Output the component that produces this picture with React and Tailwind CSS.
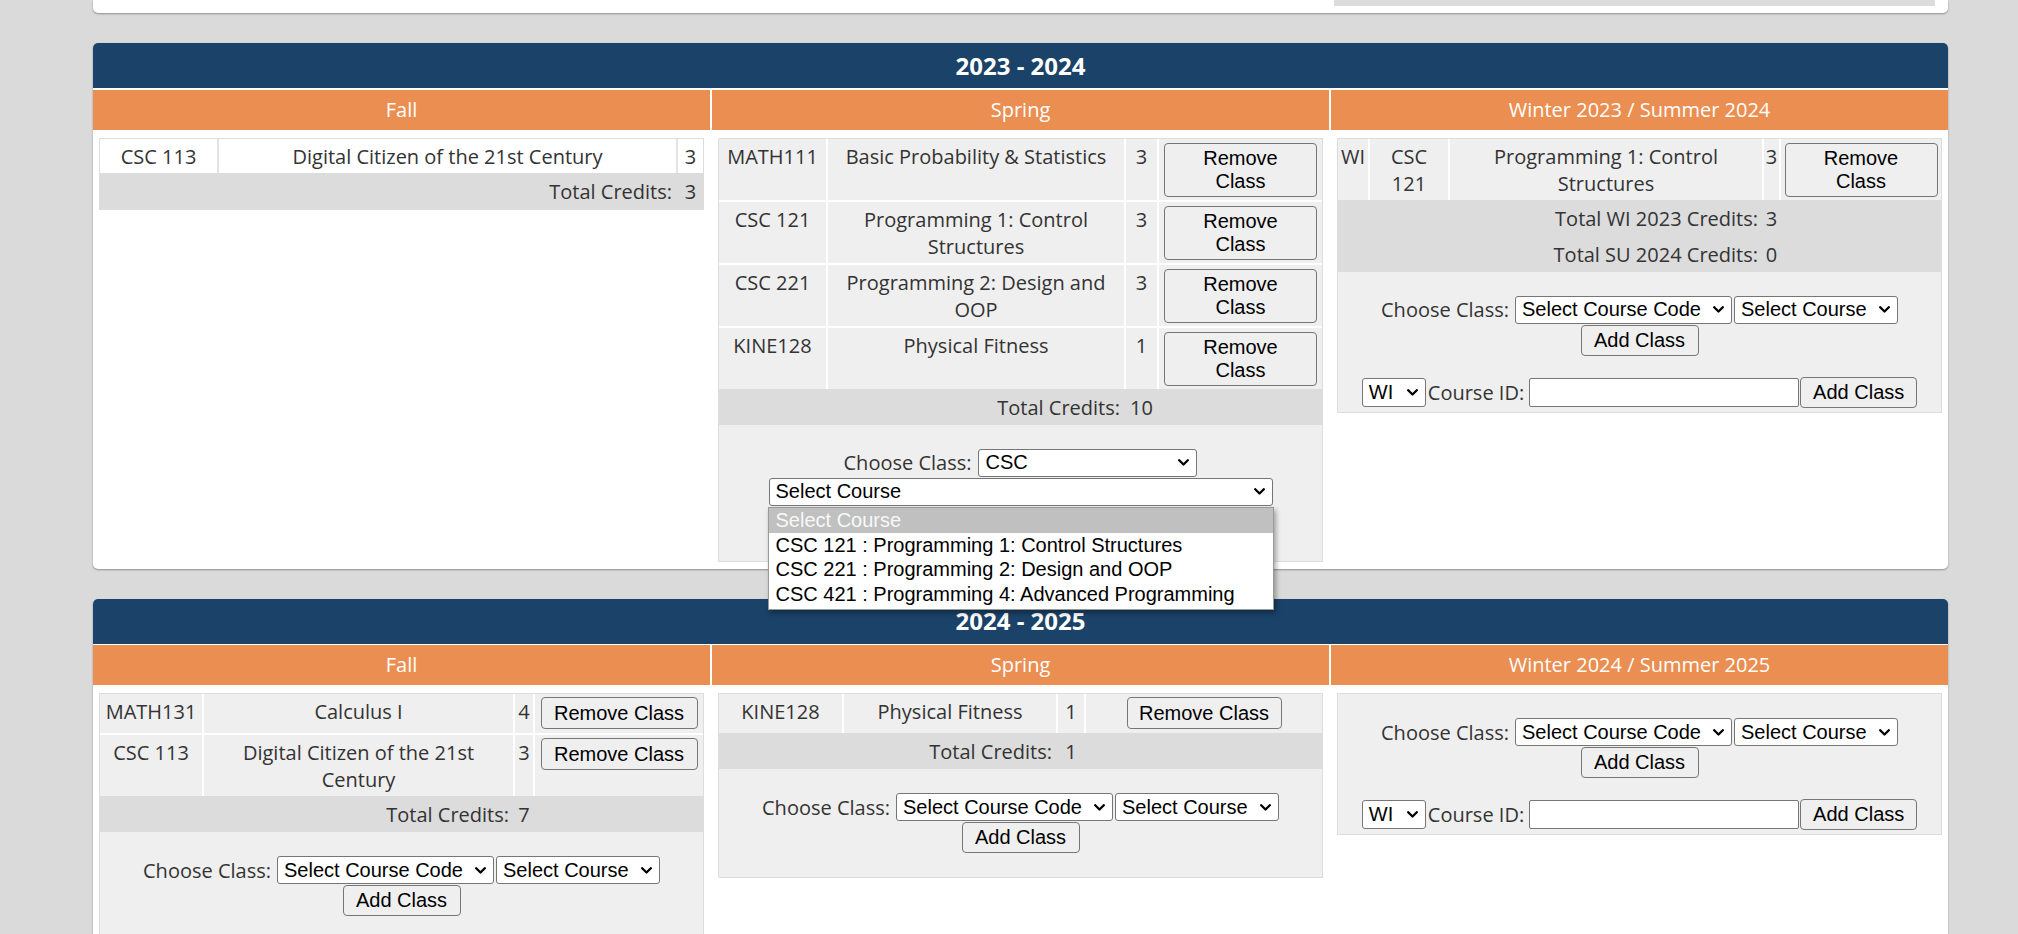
import React from "react";

function Chevron() {
  return (
    <svg width="11" height="7" viewBox="0 0 11 7" className="shrink-0">
      <path d="M1.2 1.2 L5.5 5.5 L9.8 1.2" fill="none" stroke="#000" strokeWidth="2.3" strokeLinecap="round" strokeLinejoin="round" />
    </svg>
  );
}

function Sel({ className = "", h = "h-[28px]", text }) {
  return (
    <div
      className={
        "bg-white border border-[#767676] rounded-[3px] flex items-center justify-between pl-[6px] pr-[7px] text-[20px] leading-[23px] text-black font-['Liberation_Sans',Arial,sans-serif] " +
        h +
        " " +
        className
      }
    >
      <span className="whitespace-nowrap">{text}</span>
      <Chevron />
    </div>
  );
}

function Btn({ className = "", children }) {
  return (
    <button
      type="button"
      className={
        "bg-[#efefef] border border-[#767676] rounded-[4px] text-[20px] leading-[23px] text-black text-center font-['Liberation_Sans',Arial,sans-serif] " +
        className
      }
    >
      {children}
    </button>
  );
}

const C = "px-[4px] pt-[4px] pb-[3px] text-center leading-[27px]";
const N = "pt-[4px] pb-[3px] text-center leading-[27px]";
const B2 = "flex justify-center pt-[4px] pb-[3px]";
const B1 = "flex justify-center pt-[3px] pb-[4px]";
const TL = "pr-[4px] pt-[5px] pb-[4px] text-right leading-[27px]";
const TN = "pt-[5px] pb-[4px] text-center leading-[27px]";

function ChooseForm({ winter }) {
  return (
    <div className={"pt-[24px] flex flex-col items-center " + (winter ? "pb-[4px]" : "pb-[24px]")}>
      <div className="flex items-center h-[28px]">
        <span className="mr-[6px] leading-[27px] whitespace-nowrap">Choose Class:</span>
        <Sel className="w-[217px]" text="Select Course Code" />
        <Sel className="w-[164px] ml-[2px]" text="Select Course" />
      </div>
      <Btn className="w-[118px] h-[31px] mt-[1px]">Add Class</Btn>
      {winter && (
        <div className="flex items-center mt-[21px]">
          <Sel className="w-[64px]" h="h-[29px]" text="WI" />
          <span className="ml-[2px] leading-[27px] whitespace-nowrap">Course ID:</span>
          <input type="text" className="ml-[5px] w-[270px] h-[29px] bg-white border border-[#767676] rounded-[2px]" />
          <Btn className="ml-[1px] w-[117px] h-[31px]">Add Class</Btn>
        </div>
      )}
    </div>
  );
}

function YearHeader({ title, winter }) {
  return (
    <>
      <div className="h-[45px] bg-[#1b4268] rounded-t-[5px] flex items-center justify-center text-white font-bold text-[24px] leading-[30px]">
        {title}
      </div>
      <div className="grid grid-cols-3 gap-x-[2px] mt-[1.5px]">
        <div className="h-[40px] bg-[#eb8e51] text-white text-[20px] flex items-center justify-center">Fall</div>
        <div className="h-[40px] bg-[#eb8e51] text-white text-[20px] flex items-center justify-center">Spring</div>
        <div className="h-[40px] bg-[#eb8e51] text-white text-[20px] flex items-center justify-center">{winter}</div>
      </div>
    </>
  );
}

function Year1() {
  return (
    <div className="mt-[30px] bg-white rounded-[5px] shadow-[0_1px_2px_rgba(0,0,0,0.35)] pb-[7px]">
      <YearHeader title="2023 - 2024" winter="Winter 2023 / Summer 2024" />
      <div className="grid grid-cols-3 gap-x-[2px] pt-[8px] items-start">
        {/* Fall */}
        <div className="px-[6px]">
          <div className="border border-[#dddddd] bg-[#e3e3e3]">
            <div className="grid grid-cols-[117px_457px_1fr] gap-x-[2px]">
              <div className={C + " bg-white"}>CSC 113</div>
              <div className={C + " bg-white"}>Digital Citizen of the 21st Century</div>
              <div className={N + " bg-white"}>3</div>
            </div>
            <div className="grid grid-cols-[117px_457px_1fr] gap-x-[2px] bg-[#dcdcdc]">
              <div className={TL + " col-span-2"}>Total Credits:</div>
              <div className={TN}>3</div>
            </div>
          </div>
        </div>
        {/* Spring */}
        <div className="px-[6px]">
          <div className="border border-[#dddddd] bg-[#efefef]">
            <div className="grid grid-cols-[107px_296px_31px_1fr] gap-[2px] bg-white">
              <div className={C + " bg-[#efefef]"}>MATH111</div>
              <div className={C + " bg-[#efefef]"}>Basic Probability &amp; Statistics</div>
              <div className={N + " bg-[#efefef]"}>3</div>
              <div className={B2 + " bg-[#efefef]"}>
                <Btn className="w-[153px] h-[54px]">Remove<br />Class</Btn>
              </div>
              <div className={C + " bg-[#efefef]"}>CSC 121</div>
              <div className={C + " bg-[#efefef]"}>Programming 1: Control<br />Structures</div>
              <div className={N + " bg-[#efefef]"}>3</div>
              <div className={B2 + " bg-[#efefef]"}>
                <Btn className="w-[153px] h-[54px]">Remove<br />Class</Btn>
              </div>
              <div className={C + " bg-[#efefef]"}>CSC 221</div>
              <div className={C + " bg-[#efefef]"}>Programming 2: Design and<br />OOP</div>
              <div className={N + " bg-[#efefef]"}>3</div>
              <div className={B2 + " bg-[#efefef]"}>
                <Btn className="w-[153px] h-[54px]">Remove<br />Class</Btn>
              </div>
              <div className={C + " bg-[#efefef]"}>KINE128</div>
              <div className={C + " bg-[#efefef]"}>Physical Fitness</div>
              <div className={N + " bg-[#efefef]"}>1</div>
              <div className={B2 + " bg-[#efefef]"}>
                <Btn className="w-[153px] h-[54px]">Remove<br />Class</Btn>
              </div>
            </div>
            <div className="grid grid-cols-[107px_296px_31px_1fr] gap-x-[2px] bg-[#dcdcdc]">
              <div className={TL + " col-span-2"}>Total Credits:</div>
              <div className={TN}>10</div>
            </div>
            <div className="pt-[24px] pb-[23px] flex flex-col items-center">
              <div className="flex items-center h-[28px]">
                <span className="mr-[7px] leading-[27px] whitespace-nowrap">Choose Class:</span>
                <Sel className="w-[219px]" text="CSC" />
              </div>
              <div className="relative mt-[1px]">
                <Sel className="w-[504px]" text="Select Course" />
                <div className="absolute left-[-1px] top-[29px] z-50 w-[506px] bg-white border border-[#9a9a9a] shadow-[2px_3px_5px_rgba(0,0,0,0.35)] pb-[3px] text-[20px] text-black font-['Liberation_Sans',Arial,sans-serif]">
                  <div className="h-[25px] leading-[25px] pl-[7px] bg-[#c0c0c0] text-[#f8f8f8]">Select Course</div>
                  <div className="h-[24.5px] leading-[24.5px] pl-[7px] whitespace-nowrap">CSC 121 : Programming 1: Control Structures</div>
                  <div className="h-[24.5px] leading-[24.5px] pl-[7px] whitespace-nowrap">CSC 221 : Programming 2: Design and OOP</div>
                  <div className="h-[24.5px] leading-[24.5px] pl-[7px] whitespace-nowrap">CSC 421 : Programming 4: Advanced Programming</div>
                </div>
              </div>
              <Btn className="w-[118px] h-[31px] mt-[1px]">Add Class</Btn>
            </div>
          </div>
        </div>
        {/* Winter */}
        <div className="px-[6px]">
          <div className="border border-[#dddddd] bg-[#efefef]">
            <div className="grid grid-cols-[30px_78px_312px_15px_1fr] gap-[2px] bg-white">
              <div className={N + " bg-[#efefef]"}>WI</div>
              <div className={C + " bg-[#efefef]"}>CSC<br />121</div>
              <div className={C + " bg-[#efefef]"}>Programming 1: Control<br />Structures</div>
              <div className={N + " bg-[#efefef]"}>3</div>
              <div className={B2 + " bg-[#efefef]"}>
                <Btn className="w-[153px] h-[54px]">Remove<br />Class</Btn>
              </div>
            </div>
            <div className="grid grid-cols-[30px_78px_312px_15px_1fr] gap-x-[2px] bg-[#dcdcdc]">
              <div className={TL + " col-span-3"}>Total WI 2023 Credits:</div>
              <div className={TN}>3</div>
              <div />
              <div className={TL + " col-span-3"}>Total SU 2024 Credits:</div>
              <div className={TN}>0</div>
              <div />
            </div>
            <ChooseForm winter />
          </div>
        </div>
      </div>
    </div>
  );
}

function Year2() {
  return (
    <div className="mt-[30px] bg-white rounded-[5px] shadow-[0_1px_2px_rgba(0,0,0,0.35)] pb-[7px]">
      <YearHeader title="2024 - 2025" winter="Winter 2024 / Summer 2025" />
      <div className="grid grid-cols-3 gap-x-[2px] pt-[8px] items-start">
        {/* Fall */}
        <div className="px-[6px]">
          <div className="border border-[#dddddd] bg-[#efefef]">
            <div className="grid grid-cols-[102px_309px_18px_1fr] gap-[2px] bg-white">
              <div className={C + " bg-[#efefef]"}>MATH131</div>
              <div className={C + " bg-[#efefef]"}>Calculus I</div>
              <div className={N + " bg-[#efefef]"}>4</div>
              <div className={B1 + " bg-[#efefef]"}>
                <Btn className="w-[157px] h-[32px] whitespace-nowrap">Remove Class</Btn>
              </div>
              <div className={C + " bg-[#efefef]"}>CSC 113</div>
              <div className={C + " bg-[#efefef]"}>Digital Citizen of the 21st<br />Century</div>
              <div className={N + " bg-[#efefef]"}>3</div>
              <div className={B1 + " bg-[#efefef] items-start"}>
                <Btn className="w-[157px] h-[32px] whitespace-nowrap">Remove Class</Btn>
              </div>
            </div>
            <div className="grid grid-cols-[102px_309px_18px_1fr] gap-x-[2px] bg-[#dcdcdc]">
              <div className={TL + " col-span-2"}>Total Credits:</div>
              <div className={TN}>7</div>
            </div>
            <ChooseForm />
          </div>
        </div>
        {/* Spring */}
        <div className="px-[6px]">
          <div className="border border-[#dddddd] bg-[#efefef]">
            <div className="grid grid-cols-[123px_212px_26px_1fr] gap-[2px] bg-white">
              <div className={C + " bg-[#efefef]"}>KINE128</div>
              <div className={C + " bg-[#efefef]"}>Physical Fitness</div>
              <div className={N + " bg-[#efefef]"}>1</div>
              <div className={B1 + " bg-[#efefef]"}>
                <Btn className="w-[155px] h-[32px] whitespace-nowrap">Remove Class</Btn>
              </div>
            </div>
            <div className="grid grid-cols-[123px_212px_26px_1fr] gap-x-[2px] bg-[#dcdcdc]">
              <div className={TL + " col-span-2"}>Total Credits:</div>
              <div className={TN}>1</div>
            </div>
            <ChooseForm />
          </div>
        </div>
        {/* Winter */}
        <div className="px-[6px]">
          <div className="border border-[#dddddd] bg-[#efefef]">
            <ChooseForm winter />
          </div>
        </div>
      </div>
    </div>
  );
}

export default function App() {
  return (
    <div className="min-h-screen bg-[#dadada] font-['Open_Sans',sans-serif] text-[20px] text-[#333333] pb-[40px]">
      <div className="ml-[93px] w-[1855px] flex flex-col">
        <div className="h-[13px] bg-white rounded-b-[5px] shadow-[0_1px_2px_rgba(0,0,0,0.35)] flex justify-end pr-[13px]">
          <div className="w-[601px] h-[6px] bg-[#dcdcdc]" />
        </div>
        <Year1 />
        <Year2 />
      </div>
    </div>
  );
}
